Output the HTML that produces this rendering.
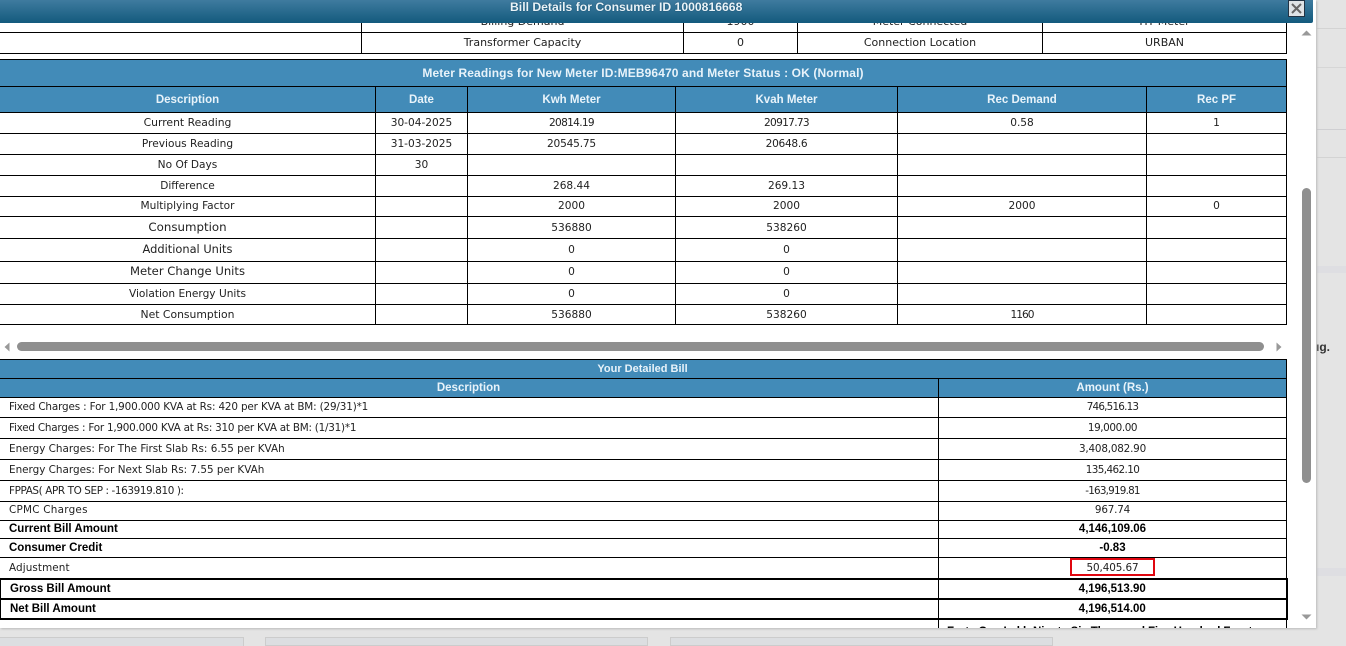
<!DOCTYPE html>
<html><head><meta charset="utf-8">
<style>
html,body{margin:0;padding:0;width:1346px;height:646px;overflow:hidden;background:#e4e4e4}
body{position:relative;font-family:"DejaVu Sans","Liberation Sans",sans-serif;font-size:10.6px;color:#222}
.a{position:absolute}
table{position:absolute;border-collapse:collapse;table-layout:fixed;background:#fff}
td,th{border:1px solid #000;padding:0;text-align:center;overflow:hidden;white-space:nowrap;line-height:12px}
th{background:#428bb8;color:#e8f3fa;font-family:"Liberation Sans",sans-serif;font-weight:bold;font-size:11.5px}
.l{text-align:left;padding-left:9px;font-size:10.4px}
.b{font-family:"Liberation Sans",sans-serif;font-weight:bold;font-size:11.5px;color:#000}
.p{padding-bottom:2px}
.x td{border-top-width:2px;border-bottom-width:2px}
.x td:last-child{border-right-width:2px}
.r{font-size:10.4px}
</style></head>
<body>
<!-- page background bits -->
<div class="a" style="left:1317px;top:28px;width:29px;height:1px;background:#d3d3d3"></div>
<div class="a" style="left:1317px;top:67px;width:29px;height:1px;background:#d6d6d6"></div>
<div class="a" style="left:1317px;top:129px;width:29px;height:1px;background:#cfcfd2"></div>
<div class="a" style="left:1317px;top:157px;width:29px;height:1px;background:#d3d3d3"></div>
<div class="a" style="left:1317px;top:266px;width:29px;height:7px;background:#dedee2"></div>
<div class="a" style="left:1317px;top:568px;width:29px;height:8px;background:#dedee2"></div>
<div class="a" style="left:1316px;top:340px;font:bold 12px 'Liberation Sans',sans-serif;color:#333">ıg.</div>
<div class="a" style="left:0;top:637px;width:244px;height:9px;background:#dcdee1;border-top:1px solid #ccc;border-right:1px solid #ccc;box-sizing:border-box"></div>
<div class="a" style="left:265px;top:637px;width:383px;height:9px;background:#dcdee1;border:1px solid #ccc;box-sizing:border-box"></div>
<div class="a" style="left:670px;top:637px;width:383px;height:9px;background:#dcdee1;border:1px solid #ccc;box-sizing:border-box"></div>

<!-- modal -->
<div class="a" style="left:0;top:0;width:1316px;height:628px;background:#fff;box-shadow:1px 1px 2px #bbb;overflow:hidden">

<table style="left:-1px;top:11px;width:1288px;font-size:11px">
<colgroup><col style="width:362px"><col style="width:322px"><col style="width:114px"><col style="width:245px"><col style="width:244px"></colgroup>
<tr style="height:21px"><td style="border-color:#fff #000 #000 #fff"></td><td>Billing Demand</td><td>1900</td><td>Meter Connected</td><td>HT Meter</td></tr>
<tr style="height:21px"><td style="border-color:#000 #000 #000 #fff;border-top-color:#fff"></td><td>Transformer Capacity</td><td>0</td><td>Connection Location</td><td>URBAN</td></tr>
</table>
<div class="a" style="left:0;top:53px;width:362px;height:1px;background:#000"></div>

<table style="left:-1px;top:59px;width:1287px">
<colgroup><col style="width:376px"><col style="width:92px"><col style="width:208px"><col style="width:222px"><col style="width:249px"><col style="width:140px"></colgroup>
<tr style="height:27px"><th colspan="6" style="font-size:12px;letter-spacing:.12px">Meter Readings for New Meter ID:MEB96470 and Meter Status : OK (Normal)</th></tr>
<tr style="height:26px"><th>Description</th><th>Date</th><th>Kwh Meter</th><th>Kvah Meter</th><th>Rec Demand</th><th>Rec PF</th></tr>
<tr style="height:21px"><td style="font-size:10.8px">Current Reading</td><td>30-04-2025</td><td style="letter-spacing:-.7px">20814.19</td><td style="letter-spacing:-.7px">20917.73</td><td>0.58</td><td>1</td></tr>
<tr style="height:21px"><td>Previous Reading</td><td>31-03-2025</td><td style="letter-spacing:-.2px">20545.75</td><td style="letter-spacing:-.3px">20648.6</td><td></td><td></td></tr>
<tr style="height:21px"><td>No Of Days</td><td>30</td><td></td><td></td><td></td><td></td></tr>
<tr style="height:21px"><td>Difference</td><td></td><td>268.44</td><td>269.13</td><td></td><td></td></tr>
<tr style="height:20px"><td class="p">Multiplying Factor</td><td></td><td class="p">2000</td><td class="p">2000</td><td class="p">2000</td><td class="p">0</td></tr>
<tr style="height:22px"><td class="p" style="font-size:11.8px">Consumption</td><td></td><td>536880</td><td>538260</td><td></td><td></td></tr>
<tr style="height:23px"><td class="p" style="font-size:11.4px">Additional Units</td><td></td><td>0</td><td>0</td><td></td><td></td></tr>
<tr style="height:22px"><td class="p" style="font-size:11.6px;padding-bottom:3px">Meter Change Units</td><td></td><td class="p">0</td><td class="p">0</td><td></td><td></td></tr>
<tr style="height:21px"><td>Violation Energy Units</td><td></td><td>0</td><td>0</td><td></td><td></td></tr>
<tr style="height:20px"><td style="font-size:10.8px">Net Consumption</td><td></td><td>536880</td><td>538260</td><td style="letter-spacing:-1px">1160</td><td></td></tr>
</table>

<!-- horizontal scrollbar -->
<div class="a" style="left:17px;top:342px;width:1247px;height:9px;border-radius:5px;background:#8f8f8f"></div>
<svg class="a" style="left:3px;top:342px" width="8" height="10"><path d="M6.500 .5V9.500L1.500 5Z" fill="#999"/></svg>
<svg class="a" style="left:1275px;top:342px" width="8" height="10"><path d="M1.500 .5V9.500L6.500 5Z" fill="#999"/></svg>

<table class="r" style="left:-2px;top:359px;width:1288px">
<colgroup><col style="width:940px"><col style="width:348px"></colgroup>
<tr style="height:19px"><th colspan="2" style="font-size:11px">Your Detailed Bill</th></tr>
<tr style="height:19px"><th>Description</th><th>Amount (Rs.)</th></tr>
<tr style="height:20px"><td class="l p" style="padding-left:10px;letter-spacing:-.15px">Fixed Charges : For 1,900.000 KVA at Rs: 420 per KVA at BM: (29/31)*1</td><td class="p" style="letter-spacing:-.8px">746,516.13</td></tr>
<tr style="height:21px"><td class="l" style="padding-left:10px;letter-spacing:-.23px">Fixed Charges : For 1,900.000 KVA at Rs: 310 per KVA at BM: (1/31)*1</td><td style="letter-spacing:-.4px">19,000.00</td></tr>
<tr style="height:21px"><td class="l" style="padding-left:10px">Energy Charges: For The First Slab Rs: 6.55 per KVAh</td><td style="letter-spacing:-.2px">3,408,082.90</td></tr>
<tr style="height:21px"><td class="l" style="padding-left:10px">Energy Charges: For Next Slab Rs: 7.55 per KVAh</td><td style="letter-spacing:-.6px">135,462.10</td></tr>
<tr style="height:21px"><td class="l" style="padding-left:10px;letter-spacing:-.38px">FPPAS( APR TO SEP : -163919.810 ):</td><td style="letter-spacing:-.8px">-163,919.81</td></tr>
<tr style="height:19px"><td class="l p" style="padding-left:10px;letter-spacing:.25px">CPMC Charges</td><td class="p" style="letter-spacing:-.2px">967.74</td></tr>
<tr style="height:18px"><td class="l b p" style="padding-left:10px">Current Bill Amount</td><td class="b p">4,146,109.06</td></tr>
<tr style="height:19px"><td class="l b" style="padding-left:10px">Consumer Credit</td><td class="b">-0.83</td></tr>
<tr style="height:21px"><td class="l" style="padding-left:10px;letter-spacing:.1px">Adjustment</td><td style="letter-spacing:-.1px">50,405.67</td></tr>
<tr class="x" style="height:20px"><td class="l b" style="padding-left:11px">Gross Bill Amount</td><td class="b">4,196,513.90</td></tr>
<tr class="x" style="height:20px"><td class="l b" style="padding-left:11px">Net Bill Amount</td><td class="b">4,196,514.00</td></tr>
<tr style="height:20px"><td style="border-bottom:0"></td><td class="b" style="vertical-align:top;text-align:left;padding:6px 0 0 8px;border-bottom:0;letter-spacing:-.1px">Forty One Lakh Ninety Six Thousand Five Hundred Fourteen</td></tr>
</table>
<div class="a" style="left:0;top:578px;width:1px;height:41px;background:#000"></div>
<div class="a" style="left:1070px;top:558px;width:85px;height:18px;border:2px solid #e0060f;box-sizing:border-box"></div>

<!-- vertical scrollbar -->
<div class="a" style="left:1302px;top:188px;width:9px;height:295px;border-radius:5px;background:#8f8f8f"></div>
<svg class="a" style="left:1301px;top:29px" width="11" height="8"><path d="M.5 6.500H10.500L5.500 1.500Z" fill="#999"/></svg>
<svg class="a" style="left:1301px;top:613px" width="11" height="8"><path d="M.5 1.500H10.500L5.500 6.500Z" fill="#999"/></svg>
</div>

<!-- title bar -->
<div class="a" style="left:0;top:0;width:1313px;height:23px;background:linear-gradient(#3f7b9f,#135a7d);border-radius:0 0 2px 0;color:#e9f3f8;font:bold 12.2px/13px 'Liberation Sans',sans-serif;text-align:center;text-shadow:0 0 1px #0a3550"><span style="position:absolute;left:510px;top:1px">Bill Details for Consumer ID 1000816668</span></div>
<div class="a" style="left:1288px;top:0;width:17px;height:17px;background:#dfe3e6;border:1px solid #234;box-sizing:border-box">
<svg style="display:block" width="15" height="15"><path d="M3 3L12 12M12 3L3 12" stroke="#666" stroke-width="2"/></svg></div>
</body></html>
